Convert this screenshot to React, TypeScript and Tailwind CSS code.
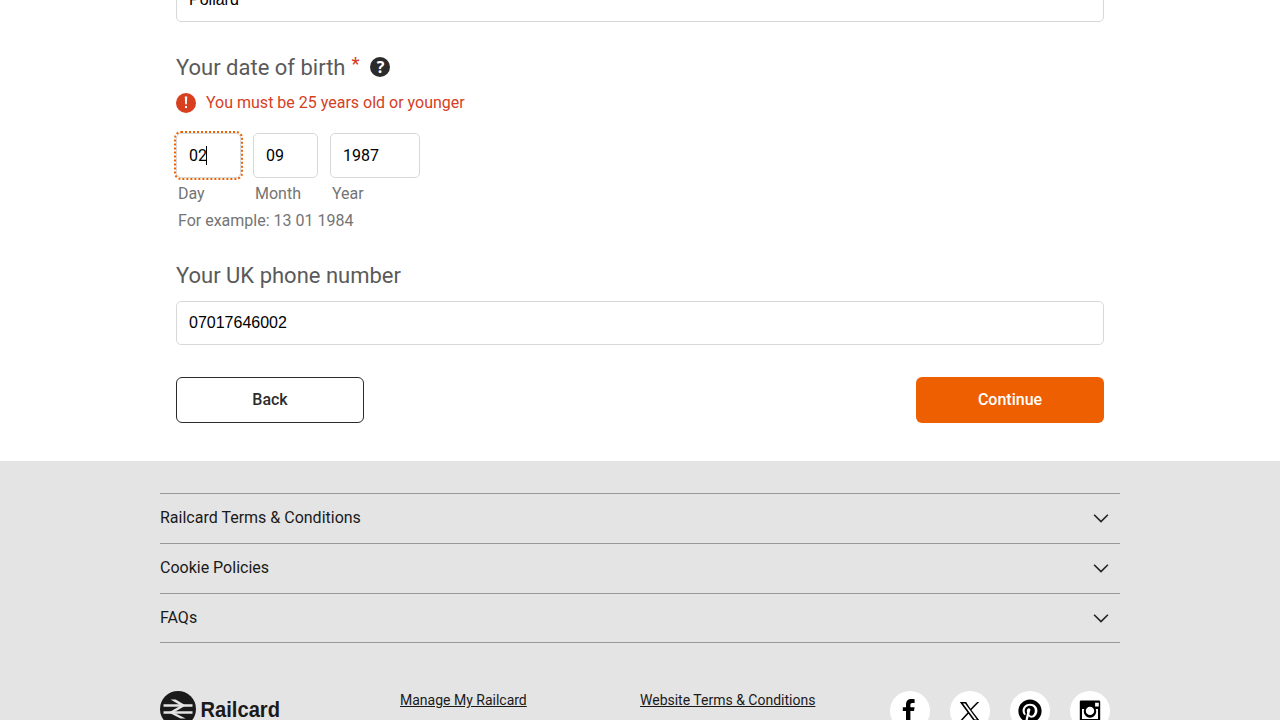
import type { ReactNode } from "react";
import { FaPinterest } from "react-icons/fa";

function Field({ className = "", children }: { className?: string; children: ReactNode }) {
  return (
    <div className={`flex items-center rounded-[5px] border border-[#d8d8d8] bg-white px-3 text-base text-black ${className}`}>
      {children}
    </div>
  );
}

function DatePart({ label, className, children }: { label: string; className: string; children: ReactNode }) {
  return (
    <div>
      <Field className={`h-[45px] ${className}`}>{children}</Field>
      <div className="mt-1 pl-0.5 text-base leading-6 text-[#747474]">{label}</div>
    </div>
  );
}

function AccordionRow({ title, className = "h-[50px]" }: { title: string; className?: string }) {
  return (
    <div className={`flex items-start justify-between border-t border-[#999] pt-3 pr-[11px] ${className}`}>
      <span className="leading-6">{title}</span>
      <svg className="mt-2" width="16" height="10" viewBox="0 0 16 10" fill="none" stroke="#222" strokeWidth="1.6">
        <path d="M1.100 .7 8 7.600 14.900 .7" />
      </svg>
    </div>
  );
}

function Social({ children }: { children: ReactNode }) {
  return <a className="flex h-10 w-10 items-center justify-center rounded-full bg-white text-black">{children}</a>;
}

function Glyph({ children }: { children: ReactNode }) {
  return (
    <svg width="24" height="24" viewBox="0 0 24 24" fill="#000">
      {children}
    </svg>
  );
}

export default function App() {
  return (
    <div className="flex h-[720px] flex-col overflow-hidden bg-white font-['Roboto',sans-serif]">
      <main className="mx-auto h-[461px] w-[928px] shrink-0">
        <Field className="-mt-[22px] h-11 font-['Liberation_Sans',Arial,sans-serif]">Pollard</Field>

        <div className="mt-[30px] flex h-[30px] items-center text-[22px] text-[#5a5a5a]">
          <span>Your date of birth</span>
          <span className="ml-1.5 w-[19px] pb-1.5 text-[18px] leading-5 font-medium text-[#d5401f]">*</span>
          <span className="flex h-5 w-5 items-center justify-center rounded-full bg-[#2b2b2b] font-['Open_Sans',sans-serif] text-base leading-5 font-bold text-white">?</span>
        </div>

        <div className="mt-[9px] flex h-6 items-center gap-2.5 text-base text-[#d5401f]">
          <svg width="20" height="20" viewBox="0 0 20 20">
            <circle cx="10" cy="10" r="10" fill="#d83f1f" />
            <path d="M8.800 3.500h2.400l-.4 7.700H9.200z" fill="#fff" />
            <rect x="9" y="13" width="2" height="2" fill="#fff" />
          </svg>
          <span>You must be 25 years old or younger</span>
        </div>

        <div className="mt-[18px] flex">
          <DatePart label="Day" className="mr-3 w-[65px] outline-2 outline-dotted outline-[#ee6000]">
            02
            <span className="-ml-px h-[19px] w-px shrink-0 bg-black" />
          </DatePart>
          <DatePart label="Month" className="mr-3 w-[65px]">09</DatePart>
          <DatePart label="Year" className="w-[90px]">1987</DatePart>
        </div>
        <div className="mt-[3px] pl-0.5 text-base leading-6 text-[#747474]">For example: 13 01 1984</div>

        <div className="mt-7 h-[30px] text-[22px] leading-[30px] text-[#5a5a5a]">Your UK phone number</div>
        <Field className="mt-2.5 h-11 font-['Liberation_Sans',Arial,sans-serif]">07017646002</Field>

        <div className="mt-8 flex justify-between text-base font-medium">
          <button className="h-[46px] w-[188px] rounded-md border border-[#2b2b2b] text-[#2b2b2b]">Back</button>
          <button className="h-[46px] w-[188px] rounded-md bg-[#ed5f00] text-white">Continue</button>
        </div>
      </main>

      <footer className="grow bg-[#e4e4e4] pt-8 text-[#1a1a1a]">
        <div className="mx-auto w-[960px]">
          <div className="border-b border-[#999] text-base">
            <AccordionRow title="Railcard Terms & Conditions" />
            <AccordionRow title="Cookie Policies" />
            <AccordionRow title="FAQs" className="h-[49px]" />
          </div>

          <div className="mt-12 flex text-sm">
            <div className="flex w-60 items-start">
              <svg width="120" height="36" viewBox="0 0 120 36">
                <circle cx="18" cy="18" r="18" fill="#1a1a1a" />
                <path d="M3.500 14.500h29M3.500 21.500h29" stroke="#e4e4e4" strokeWidth="2.500" />
                <path d="M10.500 8.500h5.200l10 6-12 7 12 6h-5.200l-11.700-6 12-7z" fill="#e4e4e4" />
                <text x="40.500" y="26.200" textLength="79.500" lengthAdjust="spacingAndGlyphs" fill="#1a1a1a" fontFamily="Liberation Sans, sans-serif" fontWeight="700" fontSize="21.500">Railcard</text>
              </svg>
            </div>
            <div className="w-60 leading-[18px] underline">Manage My Railcard</div>
            <div className="w-[250px] leading-[18px] underline">Website Terms &amp; Conditions</div>
            <div className="flex gap-5">
              <Social>
                <Glyph>
                  <path d="M8 24V12H4.800V8.200H8V5.800C8 2 10 0 13.400 0c1.500 0 2.800.1 3.200.2v3.700h-2.200c-1.700 0-2 .8-2 2v2.300h4.200L16 12h-3.600v12z" />
                </Glyph>
              </Social>
              <Social>
                <Glyph>
                  <path d="M13.400 10.900 21.200 3h-2.100l-6.600 6.700L8.100 3H1.800l7.700 10.500L1.800 22h2l6.700-7.200 5.300 7.200h6.100zM4.900 4.400h2.200l11.800 16.200h-2.200z" />
                </Glyph>
              </Social>
              <Social>
                <FaPinterest size={24} />
              </Social>
              <Social>
                <Glyph>
                  <path fillRule="evenodd" d="M3 1.500h18A1.200 1.200 0 0 1 22.200 2.700v18.100a1.200 1.200 0 0 1-1.200 1.200H3a1.200 1.200 0 0 1-1.200-1.200V2.700A1.200 1.200 0 0 1 3 1.500zm14.100 2.200v3.900h3.700V3.700zM4 10v10h16V10h-2.300a6.200 6.200 0 1 1-11.400 0zM12 7.700a4.200 4.200 0 1 0 0 8.400 4.200 4.200 0 0 0 0-8.400z" />
                </Glyph>
              </Social>
            </div>
          </div>
        </div>
      </footer>
    </div>
  );
}
